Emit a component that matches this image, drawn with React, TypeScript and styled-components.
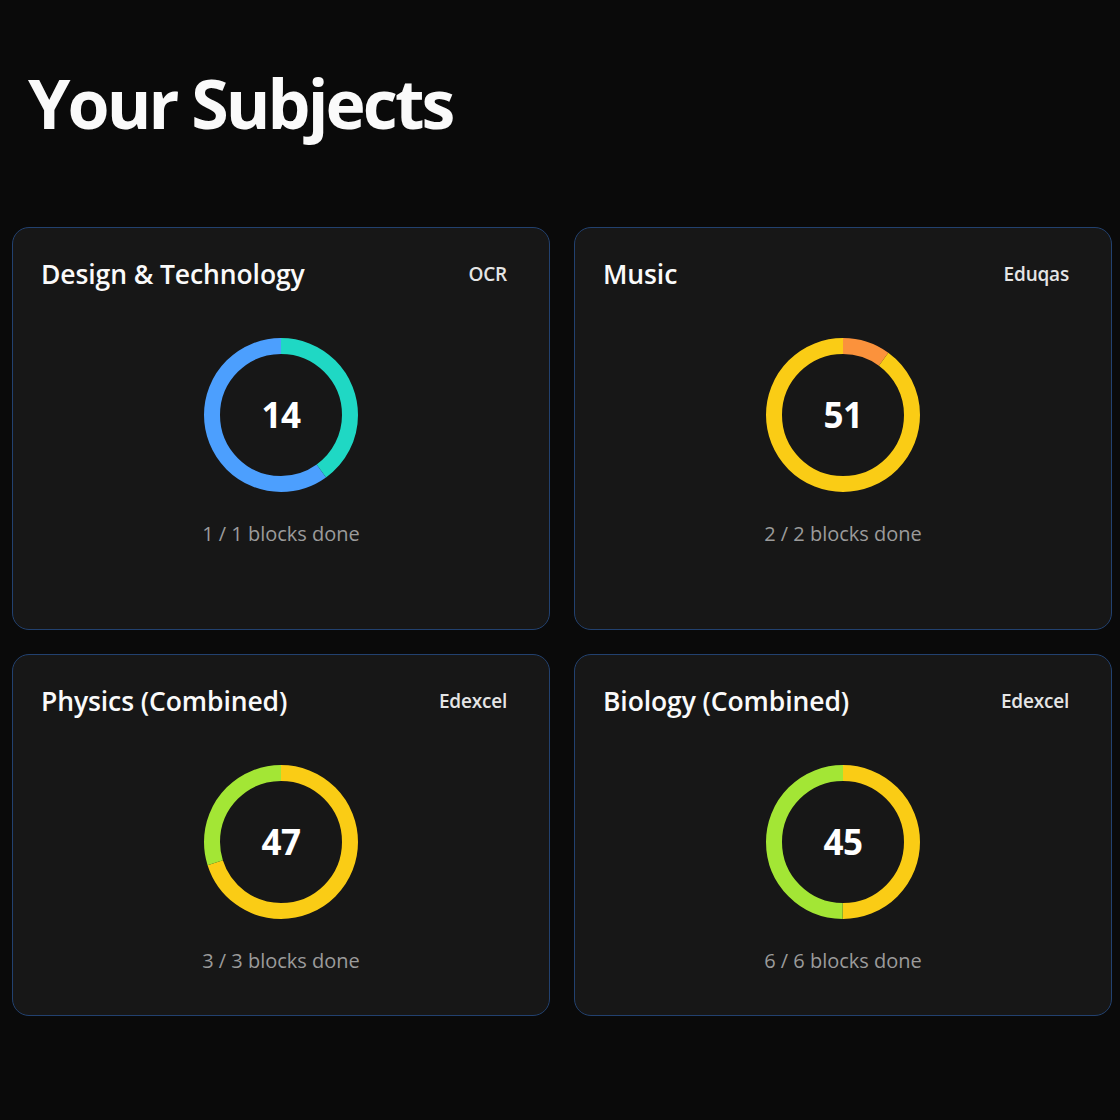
import React from "react";
import styled, { createGlobalStyle } from "styled-components";

const Global = createGlobalStyle`
  html, body {
    margin: 0;
    padding: 0;
    background: #0a0a0a;
  }
  body {
    font-family: "Open Sans", "Noto Sans", sans-serif;
    color: #fafafa;
  }
`;

const Page = styled.main`
  padding: 62px 8px 40px 12px;
`;

const Heading = styled.h1`
  margin: 0 0 83px 16px;
  font-size: 68px;
  line-height: 1.2;
  font-weight: 700;
  letter-spacing: -2.9px;
  color: #fafafa;
`;

const Grid = styled.div`
  display: grid;
  grid-template-columns: 1fr 1fr;
  grid-template-rows: 403px 362px;
  column-gap: 24px;
  row-gap: 24px;
`;

const Card = styled.section`
  box-sizing: border-box;
  background: #171717;
  border: 1px solid #22416f;
  border-radius: 17px;
  padding: 26px 42px 0 28px;
  display: flex;
  flex-direction: column;
`;

const CardHeader = styled.header`
  display: flex;
  justify-content: space-between;
  align-items: center;
  height: 40px;
`;

const SubjectName = styled.h2`
  margin: 0;
  font-size: 26.5px;
  font-weight: 600;
  letter-spacing: -0.1px;
  color: #fafafa;
`;

const Board = styled.span`
  font-size: 19px;
  font-weight: 600;
  color: #e5e5e5;
  letter-spacing: -0.2px;
`;

const Body = styled.div`
  display: flex;
  flex-direction: column;
  align-items: center;
  margin-top: 44px;
  margin-left: 14px;
`;

const DonutWrap = styled.div`
  position: relative;
  width: 154px;
  height: 154px;
`;

const DonutValue = styled.span`
  position: absolute;
  inset: 0;
  display: flex;
  align-items: center;
  justify-content: center;
  font-size: 35px;
  font-weight: 700;
  color: #ffffff;
  letter-spacing: -0.5px;
`;

const Progress = styled.p`
  margin: 28px 0 0;
  font-size: 20px;
  color: #9b9b9b;
  letter-spacing: 0;
`;

type Seg = { frac: number; color: string };

const SW = 16;
const R = 77 - SW / 2;
const C = 2 * Math.PI * R;

function Donut({ value, segs }: { value: number; segs: Seg[] }) {
  let offset = 0;
  return (
    <DonutWrap>
      <svg width="154" height="154" viewBox="0 0 154 154">
        <g transform="rotate(-90 77 77)">
          {segs.map((s, i) => {
            const len = s.frac * C;
            const el = (
              <circle
                key={i}
                cx="77"
                cy="77"
                r={R}
                fill="none"
                stroke={s.color}
                strokeWidth={SW}
                strokeDasharray={`${len} ${C - len}`}
                strokeDashoffset={-offset}
              />
            );
            offset += len;
            return el;
          })}
        </g>
      </svg>
      <DonutValue>{value}</DonutValue>
    </DonutWrap>
  );
}

const YELLOW = "#facc15";
const GREEN = "#a3e635";
const ORANGE = "#fb923c";
const BLUE = "#4c9ffe";
const TEAL = "#1fd8c4";

const subjects = [
  {
    name: "Design & Technology",
    board: "OCR",
    value: 14,
    done: "1 / 1 blocks done",
    segs: [
      { frac: 0.4, color: TEAL },
      { frac: 0.6, color: BLUE },
    ],
  },
  {
    name: "Music",
    board: "Eduqas",
    value: 51,
    done: "2 / 2 blocks done",
    segs: [
      { frac: 0.1, color: ORANGE },
      { frac: 0.9, color: YELLOW },
    ],
  },
  {
    name: "Physics (Combined)",
    board: "Edexcel",
    value: 47,
    done: "3 / 3 blocks done",
    segs: [
      { frac: 0.7, color: YELLOW },
      { frac: 0.3, color: GREEN },
    ],
  },
  {
    name: "Biology (Combined)",
    board: "Edexcel",
    value: 45,
    done: "6 / 6 blocks done",
    segs: [
      { frac: 0.5, color: YELLOW },
      { frac: 0.5, color: GREEN },
    ],
  },
];

export default function App() {
  return (
    <>
      <Global />
      <Page>
        <Heading>Your Subjects</Heading>
        <Grid>
          {subjects.map((s) => (
            <Card key={s.name}>
              <CardHeader>
                <SubjectName>{s.name}</SubjectName>
                <Board>{s.board}</Board>
              </CardHeader>
              <Body>
                <Donut value={s.value} segs={s.segs} />
                <Progress>{s.done}</Progress>
              </Body>
            </Card>
          ))}
        </Grid>
      </Page>
    </>
  );
}
